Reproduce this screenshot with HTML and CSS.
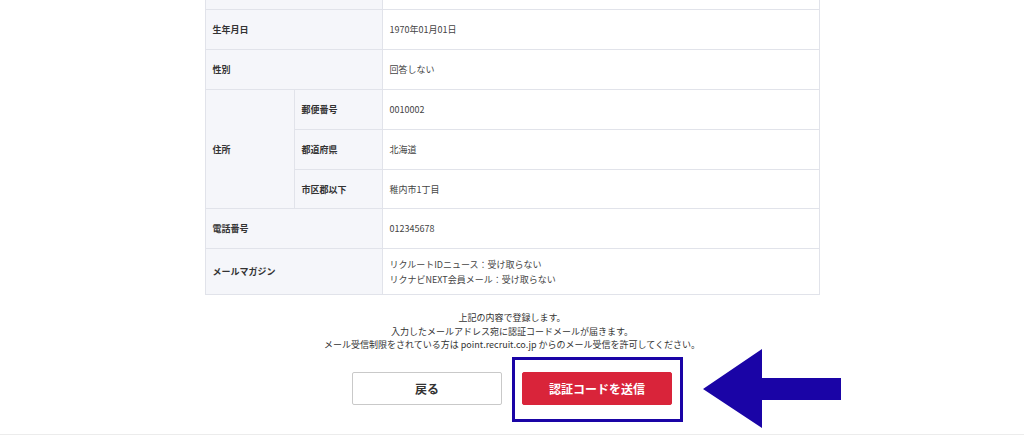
FILE: index.html
```html
<!DOCTYPE html>
<html lang="ja">
<head>
<meta charset="utf-8">
<link rel="stylesheet" href="styles.css">
</head>
<body>
<main class="page">
  <table class="confirm">
    <colgroup>
      <col class="c1"><col class="c2"><col class="c3">
    </colgroup>
    <tr class="sliver"><th colspan="2"></th><td></td></tr>
    <tr><th colspan="2">生年月日</th><td>1970年01月01日</td></tr>
    <tr><th colspan="2">性別</th><td>回答しない</td></tr>
    <tr><th rowspan="3">住所</th><th class="sub">郵便番号</th><td>0010002</td></tr>
    <tr><th class="sub">都道府県</th><td>北海道</td></tr>
    <tr class="short"><th class="sub">市区郡以下</th><td>稚内市1丁目</td></tr>
    <tr><th colspan="2">電話番号</th><td>012345678</td></tr>
    <tr class="tall"><th colspan="2">メールマガジン</th><td>リクルートIDニュース：受け取らない<br>リクナビNEXT会員メール：受け取らない</td></tr>
  </table>

  <p class="note">上記の内容で登録します。<br>入力したメールアドレス宛に認証コードメールが届きます。<br>メール受信制限をされている方は point.recruit.co.jp からのメール受信を許可してください。</p>

  <div class="actions">
    <button class="btn btn-back" type="button">戻る</button>
    <div class="highlight-wrap">
      <button class="btn btn-send" type="button">認証コードを送信</button>
      <span class="highlight"></span>
      <svg class="arrow" width="139" height="80" viewBox="0 0 139 80" aria-hidden="true">
        <polygon points="0,40 59,0 59,29 138,29 138,51 59,51 59,79" fill="#1a04a6"/>
      </svg>
    </div>
  </div>
</main>
<footer class="footer"></footer>
</body>
</html>
```
FILE: styles.css
```css
html, body {
  margin: 0;
  padding: 0;
  background: #fff;
}
body {
  font-family: "Noto Sans CJK JP", "Noto Sans", sans-serif;
  color: #333;
  overflow: hidden;
  height: 436px;
}
.page {
  width: 615px;
  margin: 0 auto;
}
.confirm {
  width: 615px;
  border-collapse: collapse;
  table-layout: fixed;
  font-size: 9px;
}
.c1 { width: 89px; }
.c2 { width: 88px; }
.c3 { width: auto; }
.confirm th,
.confirm td {
  border: 1px solid #e1e3ea;
  height: 39px;
  padding: 0 7px;
  text-align: left;
  vertical-align: middle;
  line-height: 15px;
}
.confirm th {
  background: #f5f6fa;
  font-weight: 700;
  color: #333;
}
.confirm td {
  background: #fff;
  color: #444;
  font-weight: 400;
}
.confirm tr.sliver th,
.confirm tr.sliver td {
  height: 9px;
  border-top: 0;
}
.confirm tr.short th,
.confirm tr.short td {
  height: 38px;
}
.confirm tr.tall th,
.confirm tr.tall td {
  height: 45px;
}
.note {
  margin: 16px 0 0;
  text-align: center;
  font-size: 9px;
  line-height: 13.5px;
  color: #333;
}
.actions {
  display: flex;
  justify-content: center;
  gap: 20px;
  margin-top: 20px;
}
.btn {
  width: 150px;
  height: 33px;
  box-sizing: border-box;
  font-family: "Noto Sans CJK JP", "Noto Sans", sans-serif;
  font-size: 12px;
  font-weight: 700;
  border-radius: 2px;
  cursor: pointer;
  padding: 0;
}
.btn-back {
  background: #fff;
  border: 1px solid #c9c9c9;
  color: #333;
}
.btn-send {
  background: #d9243a;
  border: 1px solid #d9243a;
  color: #fff;
  display: block;
}
.highlight-wrap {
  position: relative;
}
.highlight {
  position: absolute;
  left: -10px;
  right: -11px;
  top: -15px;
  bottom: -17px;
  border: 3px solid #1a04a6;
  pointer-events: none;
}
.arrow {
  position: absolute;
  left: 181px;
  top: -23px;
  display: block;
}
.footer {
  margin-top: 29px;
  border-top: 1px solid #ececec;
  height: 10px;
}
```
